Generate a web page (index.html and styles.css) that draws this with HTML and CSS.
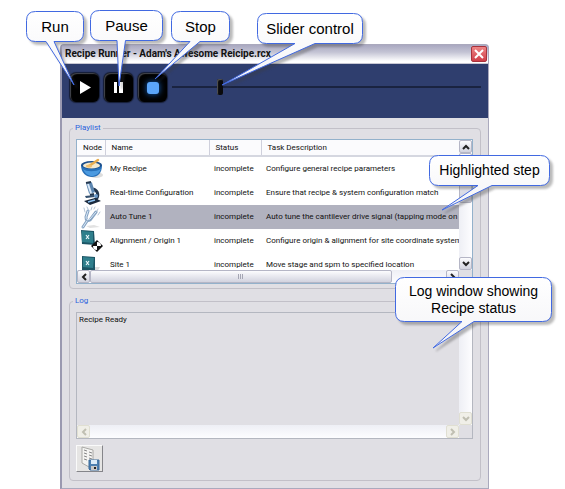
FILE: index.html
```
<!DOCTYPE html>
<html lang="en">
<head>
  <meta charset="UTF-8">
  <title>Recipe Runner</title>
  <link rel="stylesheet" href="styles.css">
</head>
<body>
  <main class="window">
    <header class="title-bar">
      <h1>Recipe Runner - Adam's Awesome Reicipe.rcx</h1>
      <button class="close" aria-label="Close">
        <svg width="10" height="10" viewBox="0 0 10 10"><path d="M1 1L9 9M9 1L1 9" stroke="#fff" stroke-width="2"/></svg>
      </button>
    </header>

    <div class="toolbar">
      <button class="player" aria-label="Run">
        <svg width="29" height="29" viewBox="0 0 29 29"><path d="M10 8L21 14.500L10 21Z" fill="#fff"/></svg>
      </button>
      <button class="player" aria-label="Pause">
        <svg width="29" height="29" viewBox="0 0 29 29"><path d="M10 9H13V20H10ZM15 9H19V20H15Z" fill="#fff"/></svg>
      </button>
      <button class="player stop" aria-label="Stop">
        <svg width="29" height="29" viewBox="0 0 29 29"><rect x="9" y="9" width="12" height="12" rx="3" fill="#5ba6fb"/></svg>
      </button>
      <input class="slider" type="range" min="0" max="100" value="15" aria-label="Slider control">
    </div>

    <fieldset class="group">
      <legend>Playlist</legend>
      <div class="list">
        <div class="view">
          <table>
            <thead>
              <tr><th class="col-node">Node</th><th class="col-name">Name</th><th class="col-status">Status</th><th>Task Description</th></tr>
            </thead>
            <tbody>
              <tr>
                <td>
                  <svg width="24" height="24" viewBox="0 0 24 24">
                    <ellipse cx="16" cy="18" rx="7" ry="3" fill="#ddd"/>
                    <path d="M1 8C1 16 6 20 12 20S22 16 22 8Z" fill="#2870b8"/>
                    <path d="M3 12C6 15 16 15 21 12C19 17 15 19 12 19S5 17 3 12Z" fill="#4b9ae0"/>
                    <ellipse cx="11.500" cy="8" rx="10.500" ry="4" fill="#1d4f8c"/>
                    <ellipse cx="11.500" cy="8.500" rx="8.500" ry="3" fill="#f4ead0"/>
                    <path d="M9 9L18 3" stroke="#e8ad50" stroke-width="2.500" stroke-linecap="round"/>
                    <ellipse cx="9" cy="9" rx="3" ry="1.500" fill="#f0c070"/>
                  </svg>
                </td>
                <td>My Recipe</td><td>incomplete</td><td>Configure general recipe parameters</td>
              </tr>
              <tr>
                <td>
                  <svg width="24" height="24" viewBox="0 0 24 24">
                    <path d="M13 8C19 10 19 16 15 19" fill="none" stroke="#23364d" stroke-width="3"/>
                    <path d="M4 20L15 17L21 20L10 24Z" fill="#1b2a3d"/>
                    <path d="M5 15L14 14L15 16L6 17Z" fill="#34506f"/>
                    <path d="M9 2L12 12" stroke="#5d86b0" stroke-width="6"/>
                    <path d="M8 3L11 12" stroke="#dcebfa" stroke-width="2"/>
                    <path d="M6 2L11 1M10 14L14 13" stroke="#24384f" stroke-width="2"/>
                    <circle cx="16" cy="15" r="2" fill="#6d9bc9"/>
                    <path d="M8 21L15 19" stroke="#8cc2f2" stroke-width="1.500"/>
                  </svg>
                </td>
                <td>Real-time Configuration</td><td>incomplete</td><td>Ensure that recipe &amp; system configuration match</td>
              </tr>
              <tr class="selected">
                <td>
                  <svg width="24" height="24" viewBox="0 0 24 24" fill="none" stroke-linecap="round">
                    <path d="M6 21L14 20L20 22L10 23Z" fill="#e2e2e2"/>
                    <path d="M8 6L6 12Q6 17 10 15L16 7M7 16L3 22" stroke="#86a3c2" stroke-width="3"/>
                    <path d="M8 6L6 12Q6 16 10 14L16 7M7 16L3 22" stroke="#d9e9f8"/>
                    <path d="M4 3L5 7M7 2L8 4M12 2L11 5M15 2L14 4M20 7L18 10M18 4L17 6" stroke="#b4c5d6"/>
                  </svg>
                </td>
                <td>Auto Tune 1</td><td>incomplete</td><td>Auto tune the cantilever drive signal (tapping mode on</td>
              </tr>
              <tr>
                <td>
                  <svg width="24" height="24" viewBox="0 0 24 24">
                    <path d="M1 1L14 2L15 16L2 15Z" fill="#1c5565"/><path d="M2 2L13 3V14L2 13Z" fill="#2f7f8c"/>
                    <path d="M6 6L9 10M9 6L6 10" stroke="#e8f6fa" stroke-width="1.200"/>
                    <path d="M17 11L23 17L17 23L11 17Z" fill="#111"/>
                    <path d="M17 13A4 4 0 0 1 21 17H17ZM17 17V21A4 4 0 0 1 13 17Z" fill="#fff"/>
                  </svg>
                </td>
                <td>Alignment / Origin 1</td><td>incomplete</td><td>Configure origin &amp; alignment for site coordinate system</td>
              </tr>
              <tr>
                <td>
                  <svg width="24" height="24" viewBox="0 0 24 24">
                    <path d="M10 14L20 14L17 19H8Z" fill="#ddd"/>
                    <path d="M2 3L15 4V18L2 17Z" fill="#1c5565"/><path d="M3 4L14 5L13 15L3 14Z" fill="#2f7f8c"/>
                    <path d="M6 8L9 12M9 8L6 12" stroke="#e8f6fa" stroke-width="1.200"/>
                  </svg>
                </td>
                <td>Site 1</td><td>incomplete</td><td>Move stage and spm to specified location</td>
              </tr>
            </tbody>
          </table>
        </div>
        <div class="bar-v">
          <button aria-label="Scroll up"><svg width="8" height="6" viewBox="0 0 8 6"><path d="M1 5L4 2L7 5"/></svg></button>
          <div class="thumb thumb-v"></div>
          <button aria-label="Scroll down"><svg width="8" height="6" viewBox="0 0 8 6"><path d="M1 1L4 4L7 1"/></svg></button>
        </div>
        <div class="bar-h">
          <button aria-label="Scroll left"><svg width="6" height="8" viewBox="0 0 6 8"><path d="M5 1L2 4L5 7"/></svg></button>
          <div class="thumb thumb-h"><svg width="6" height="5" viewBox="0 0 6 5"><path d="M.5 0V5M2.500 0V5M4.500 0V5"/></svg></div>
          <button aria-label="Scroll right"><svg width="6" height="8" viewBox="0 0 6 8"><path d="M1 1L4 4L1 7"/></svg></button>
        </div>
      </div>
    </fieldset>

    <fieldset class="group group-log">
      <legend>Log</legend>
      <div class="list log">
        <textarea class="view" aria-label="Log" readonly>Recipe Ready</textarea>
        <div class="bar-v">
          <button disabled aria-label="Scroll up"><svg width="8" height="6" viewBox="0 0 8 6"><path d="M1 5L4 2L7 5"/></svg></button>
          <button disabled aria-label="Scroll down"><svg width="8" height="6" viewBox="0 0 8 6"><path d="M1 1L4 4L7 1"/></svg></button>
        </div>
        <div class="bar-h">
          <button disabled aria-label="Scroll left"><svg width="6" height="8" viewBox="0 0 6 8"><path d="M5 1L2 4L5 7"/></svg></button>
          <button disabled aria-label="Scroll right"><svg width="6" height="8" viewBox="0 0 6 8"><path d="M1 1L4 4L1 7"/></svg></button>
        </div>
      </div>
      <button class="save" aria-label="Save log">
        <svg width="23" height="25" viewBox="0 0 23 25">
          <path d="M4 1L15 4V17L11 21L4 17Z" fill="#f4f4f2" stroke="#a9a9a6"/>
          <path d="M6 4L9 5M6 7L9 8M6 10L9 11M6 13L9 14M11 6L14 7M11 9L14 10M11 12L14 13" stroke="#888"/>
          <path d="M11 14H21V24H12L11 23Z" fill="#4c7fb0" stroke="#3b6a99"/>
          <path d="M13 14H19V18H13Z" fill="#dcecf8"/><path d="M13 20H19V24H13Z" fill="#c8c8c8"/><path d="M16 21H18V23H16Z" fill="#222"/>
        </svg>
      </button>
    </fieldset>
  </main>

  <!-- callouts -->
  <svg class="bubbles" width="565" height="360" viewBox="0 0 565 360">
    <defs>
      <linearGradient id="fade" x1="0" y1="0" x2="0" y2="1"><stop offset="0" stop-color="#fff"/><stop offset="1" stop-color="#f3f3f6"/></linearGradient>
    </defs>
    <path d="M35.500 11.500H74.500Q83.500 11.500 83.500 20.500V32.500Q83.500 41.500 74.500 41.500H54L74 85L46 41.500H35.500Q26.500 41.500 26.500 32.500V20.500Q26.500 11.500 35.500 11.500Z"/>
    <path d="M99.500 10.500H153.500Q162.500 10.500 162.500 19.500V31.500Q162.500 40.500 153.500 40.500H125.500L119 86L117 40.500H99.500Q90.500 40.500 90.500 31.500V19.500Q90.500 10.500 99.500 10.500Z"/>
    <path d="M180.500 11.500H220.500Q229.500 11.500 229.500 20.500V32.500Q229.500 41.500 220.500 41.500H200L155 79L190 41.500H180.500Q171.500 41.500 171.500 32.500V20.500Q171.500 11.500 180.500 11.500Z"/>
    <path d="M266.500 13.500H353.500Q362.500 13.500 362.500 22.500V34.500Q362.500 43.500 353.500 43.500H315L222 85L295 43.500H266.500Q257.500 43.500 257.500 34.500V22.500Q257.500 13.500 266.500 13.500Z"/>
    <path d="M438.500 155.500H540.500Q549.500 155.500 549.500 164.500V176.500Q549.500 185.500 540.500 185.500H492L442 210L478 185.500H438.500Q429.500 185.500 429.500 176.500V164.500Q429.500 155.500 438.500 155.500Z"/>
    <path d="M404.500 277.500H542.500Q551.500 277.500 551.500 286.500V312.500Q551.500 321.500 542.500 321.500H474L433 348L462 321.500H404.500Q395.500 321.500 395.500 312.500V286.500Q395.500 277.500 404.500 277.500Z"/>
  </svg>
  <div class="callout callout-run">Run</div>
  <div class="callout callout-pause">Pause</div>
  <div class="callout callout-stop">Stop</div>
  <div class="callout callout-slider">Slider control</div>
  <div class="callout callout-step">Highlighted step</div>
  <div class="callout callout-log">Log window showing<br>Recipe status</div>
</body>
</html>
```
FILE: styles.css
```
* {
  box-sizing: border-box;
}
body {
  margin: 0;
  background: #fff;
  color: #111;
  font: 8px/12px Roboto, "Liberation Sans", sans-serif;
}
button {
  display: flex;
  align-items: center;
  justify-content: center;
  flex: none;
  padding: 0;
}
svg {
  display: block;
}
.window {
  margin: 44px 76px 0 60px;
  border: 1px solid #aaa9bd;
  border-left: 2px solid #9a99b0;
  border-radius: 4px 4px 0 0;
  background: #e0dfe4;
}

/* title bar */
.title-bar {
  display: flex;
  align-items: center;
  justify-content: space-between;
  height: 19px;
  padding: 0 1px 0 3px;
  border-bottom: 1px solid #c9c8d4;
  background: linear-gradient(#a9a8c0, #c4c4d4 40%, #fff 90%);
}
.title-bar h1 {
  margin: 0;
  font: bold 10px/14px Roboto, sans-serif;
  white-space: nowrap;
}
.close {
  width: 16px;
  height: 16px;
  border: 1px solid #a8323c;
  border-radius: 2px;
  background: linear-gradient(#ee8585, #cf3f49);
}

/* run / pause / stop */
.toolbar {
  display: flex;
  align-items: center;
  gap: 5px;
  height: 54px;
  padding: 0 7px 8px 8px;
  background: #2f3e6e;
}
.player {
  width: 29px;
  height: 29px;
  border: 0;
  border-radius: 6px;
  background: #000;
  box-shadow: inset 1px 1px 1px #44464e, 0 0 1px 1px #151c33;
}
.stop svg {
  filter: drop-shadow(0 0 3px #1766c8);
}
.slider {
  flex: 1;
  min-width: 0;
  height: 16px;
  margin: 0;
  appearance: none;
  background: linear-gradient(#1a2340, #1a2340) center / 100% 2px no-repeat;
}
.slider::-webkit-slider-thumb {
  appearance: none;
  width: 6px;
  height: 16px;
  border-radius: 2px;
  background: #0a0a0c;
  box-shadow: inset 1px 1px 1px #555;
}

/* group boxes */
.group {
  min-width: 0;
  margin: 4px 7px 0;
  padding: 5px 7px 4px 6px;
  border: 1px solid #c2c0c8;
  border-radius: 4px;
}
.group legend {
  padding: 0 2px;
  margin-left: -3px;
  color: #2c62dc;
}
.group-log {
  margin-top: 6px;
  margin-bottom: 7px;
  padding-bottom: 8px;
}
.list {
  display: grid;
  grid-template-columns: 1fr 13px;
  grid-template-rows: 130px 13px;
  border: 1px solid #93b1cb;
  background: #e0dfe4;
}
.view {
  overflow: hidden;
  background: #fff;
}
table {
  width: 100%;
  border-collapse: collapse;
  table-layout: fixed;
}
th, td {
  padding: 0 0 0 5px;
  text-align: left;
  white-space: nowrap;
}
th {
  height: 16px;
  padding-left: 6px;
  border-left: 1px solid #cfd0dc;
  border-bottom: 2px solid #d5d7e0;
  background: #fbfbfd;
  font-weight: normal;
}
th:first-child {
  border-left: 0;
}
td {
  height: 24px;
}
td:first-child {
  padding-left: 3px;
}
.col-node {
  width: 28px;
}
.col-name {
  width: 104px;
}
.col-status {
  width: 52px;
}
.selected td + td {
  background: #b1b2bf;
}

/* scroll bars */
.bar-v, .bar-h {
  display: flex;
  justify-content: space-between;
  background: linear-gradient(90deg, #eeeff5, #fdfdff);
}
.bar-v {
  flex-direction: column;
}
.bar-h {
  background: linear-gradient(#eeeff5, #fdfdff);
}
.bar-v button, .bar-h button, .thumb {
  width: 13px;
  height: 13px;
  border: 1px solid #b5b6c6;
  border-radius: 2px;
  background: linear-gradient(#fcfcfe, #d2d3df);
}
.bar-v path, .bar-h path {
  fill: none;
  stroke: #222;
  stroke-width: 2;
}
.thumb {
  display: flex;
  align-items: center;
  justify-content: center;
}
.bar-h .thumb path {
  stroke: #a5a6b4;
  stroke-width: 1;
}
.bar-v .thumb-v {
  height: 50px;
  margin-bottom: auto;
}
.bar-h .thumb-h {
  width: 79%;
  margin-right: auto;
}

/* log */
.log {
  grid-template-rows: 112px 13px;
  border: 1px solid #b4b7c0;
}
.log .view {
  width: 100%;
  padding: 1px 2px;
  border: 0;
  resize: none;
  background: #e0dfe4;
  color: #111;
  font: inherit;
}
.log button {
  border-color: #e0dfd2;
  background: #f0efe8;
}
.log .bar-v path, .log .bar-h path {
  stroke: #c0bfb2;
}
.save {
  width: 27px;
  height: 27px;
  margin-top: 6px;
  border: 1px solid;
  border-color: #fafafa #85858a #85858a #fafafa;
  background: #e6e5e4;
}

/* callouts */
.bubbles {
  position: absolute;
  top: 0;
  left: 0;
  filter: drop-shadow(3px 3px 1px rgba(60, 60, 60, 0.35));
  pointer-events: none;
}
.bubbles > path {
  fill: url(#fade);
  stroke: #4169e1;
}
.callout {
  position: absolute;
  color: #000;
  font: 15px/17px "Liberation Sans", sans-serif;
  text-align: center;
  white-space: nowrap;
}
.callout-run {
  top: 18px;
  left: 26px;
  width: 58px;
}
.callout-pause {
  top: 17px;
  left: 90px;
  width: 73px;
}
.callout-stop {
  top: 18px;
  left: 171px;
  width: 59px;
}
.callout-slider {
  top: 20px;
  left: 257px;
  width: 106px;
}
.callout-step {
  top: 162px;
  left: 429px;
  width: 121px;
  font-size: 14px;
}
.callout-log {
  top: 283px;
  left: 395px;
  width: 157px;
  font-size: 14px;
}
```
